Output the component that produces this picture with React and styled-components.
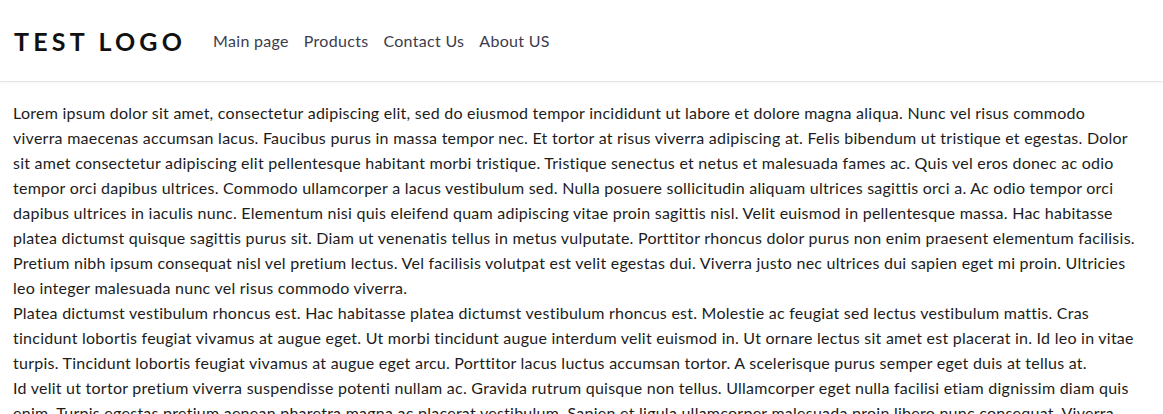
import React from "react"
import styled, { createGlobalStyle } from "styled-components"

const GlobalStyle = createGlobalStyle`
  body {
    margin: 0;
    background: #fff;
    font-family: "Lato", "Open Sans", sans-serif;
  }
`

const Header = styled.header`
  height: 81px;
  display: flex;
  align-items: center;
  padding: 0 14px;
  border-bottom: 1px solid #e6e6e6;
  box-shadow: 0 1px 2px rgba(0, 0, 0, 0.04);
`

const Logo = styled.div`
  font-family: "Lato", sans-serif;
  font-size: 25px;
  font-weight: 700;
  letter-spacing: 4.2px;
  color: #111;
  margin-right: 27px;
`

const Nav = styled.nav`
  display: flex;
  gap: 15px;
`

const NavLink = styled.a`
  font-size: 16px;
  letter-spacing: 0.3px;
  color: #3c3c4c;
  text-decoration: none;
  cursor: pointer;
`

const Main = styled.main`
  padding: 18px 13px 0;
  max-width: 1123px;
`

const Para = styled.p`
  margin: 0;
  font-size: 16px;
  line-height: 25px;
  letter-spacing: 0.25px;
  color: #1c1c1c;
`

const links = ["Main page", "Products", "Contact Us", "About US"]

const paragraphs = [
  "Lorem ipsum dolor sit amet, consectetur adipiscing elit, sed do eiusmod tempor incididunt ut labore et dolore magna aliqua. Nunc vel risus commodo viverra maecenas accumsan lacus. Faucibus purus in massa tempor nec. Et tortor at risus viverra adipiscing at. Felis bibendum ut tristique et egestas. Dolor sit amet consectetur adipiscing elit pellentesque habitant morbi tristique. Tristique senectus et netus et malesuada fames ac. Quis vel eros donec ac odio tempor orci dapibus ultrices. Commodo ullamcorper a lacus vestibulum sed. Nulla posuere sollicitudin aliquam ultrices sagittis orci a. Ac odio tempor orci dapibus ultrices in iaculis nunc. Elementum nisi quis eleifend quam adipiscing vitae proin sagittis nisl. Velit euismod in pellentesque massa. Hac habitasse platea dictumst quisque sagittis purus sit. Diam ut venenatis tellus in metus vulputate. Porttitor rhoncus dolor purus non enim praesent elementum facilisis. Pretium nibh ipsum consequat nisl vel pretium lectus. Vel facilisis volutpat est velit egestas dui. Viverra justo nec ultrices dui sapien eget mi proin. Ultricies leo integer malesuada nunc vel risus commodo viverra.",
  "Platea dictumst vestibulum rhoncus est. Hac habitasse platea dictumst vestibulum rhoncus est. Molestie ac feugiat sed lectus vestibulum mattis. Cras tincidunt lobortis feugiat vivamus at augue eget. Ut morbi tincidunt augue interdum velit euismod in. Ut ornare lectus sit amet est placerat in. Id leo in vitae turpis. Tincidunt lobortis feugiat vivamus at augue eget arcu. Porttitor lacus luctus accumsan tortor. A scelerisque purus semper eget duis at tellus at.",
  "Id velit ut tortor pretium viverra suspendisse potenti nullam ac. Gravida rutrum quisque non tellus. Ullamcorper eget nulla facilisi etiam dignissim diam quis enim. Turpis egestas pretium aenean pharetra magna ac placerat vestibulum. Sapien et ligula ullamcorper malesuada proin libero nunc consequat. Viverra justo nec ultrices dui sapien eget mi proin sed libero enim sed faucibus turpis.",
]

export default function App() {
  return (
    <>
      <GlobalStyle />
      <Header>
        <Logo>TEST LOGO</Logo>
        <Nav>
          {links.map((l) => (
            <NavLink key={l}>{l}</NavLink>
          ))}
        </Nav>
      </Header>
      <Main>
        {paragraphs.map((p, i) => (
          <Para key={i}>{p}</Para>
        ))}
      </Main>
    </>
  )
}
